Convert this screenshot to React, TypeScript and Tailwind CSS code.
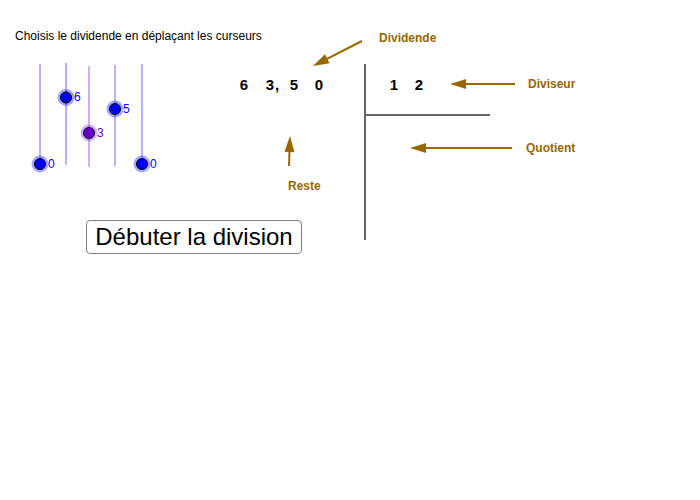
import React from "react";

const F = { fontFamily: '"Liberation Sans", Arial, sans-serif' };

function Arrow({ x1, y1, x2, y2 }: { x1: number; y1: number; x2: number; y2: number }) {
  const dx = x2 - x1;
  const dy = y2 - y1;
  const len = Math.hypot(dx, dy);
  const ux = dx / len;
  const uy = dy / len;
  const hl = 16;
  const hw = 5;
  const bx = x2 - ux * hl;
  const by = y2 - uy * hl;
  const px = -uy * hw;
  const py = ux * hw;
  return (
    <g>
      <line x1={x1} y1={y1} x2={bx + ux * 2} y2={by + uy * 2} stroke="#996600" strokeWidth={2} />
      <polygon points={`${x2},${y2} ${bx + px},${by + py} ${bx - px},${by - py}`} fill="#996600" />
    </g>
  );
}

function Point({ x, y, fill, halo }: { x: number; y: number; fill: string; halo: string }) {
  return (
    <g>
      <circle cx={x} cy={y} r={8.5} fill={halo} />
      <circle cx={x} cy={y} r={5.5} fill={fill} stroke="#000" strokeWidth={1} />
    </g>
  );
}

const digitsTop = [
  { x: 244, t: "6" },
  { x: 270, t: "3" },
  { x: 277, t: "," },
  { x: 294, t: "5" },
  { x: 319, t: "0" },
  { x: 394, t: "1" },
  { x: 419, t: "2" },
];

const sliderLabels = [
  { x: 48, y: 158, t: "0", c: "text-[#0000ff]" },
  { x: 74, y: 91, t: "6", c: "text-[#0000ff]" },
  { x: 97, y: 127, t: "3", c: "text-[#6600cc]" },
  { x: 123, y: 103, t: "5", c: "text-[#0000ff]" },
  { x: 150, y: 158, t: "0", c: "text-[#0000ff]" },
];

export default function App() {
  return (
    <div className="relative w-[700px] h-[500px] bg-white overflow-hidden" style={F}>
      <svg className="absolute left-0 top-0" width={700} height={500}>
        <line x1={40} y1={64} x2={40} y2={164} stroke="#9999ff" strokeWidth={1.5} />
        <line x1={66} y1={63} x2={66} y2={165} stroke="#9999ff" strokeWidth={1.5} />
        <line x1={89} y1={66} x2={89} y2={167} stroke="#bb99ee" strokeWidth={1.5} />
        <line x1={115} y1={65} x2={115} y2={166} stroke="#9999ff" strokeWidth={1.5} />
        <line x1={142} y1={64} x2={142} y2={164} stroke="#9999ff" strokeWidth={1.5} />
        <Point x={40} y={164} fill="#0000ff" halo="rgba(0,0,255,0.35)" />
        <Point x={66} y={97.5} fill="#0000ff" halo="rgba(0,0,255,0.35)" />
        <Point x={89} y={133} fill="#6600cc" halo="rgba(102,0,204,0.3)" />
        <Point x={115} y={109} fill="#0000ff" halo="rgba(0,0,255,0.35)" />
        <Point x={142} y={164} fill="#0000ff" halo="rgba(0,0,255,0.35)" />
        <line x1={365} y1={64} x2={365} y2={240} stroke="#666666" strokeWidth={2} />
        <line x1={365} y1={115} x2={490} y2={115} stroke="#666666" strokeWidth={2} />
        <Arrow x1={362} y1={41} x2={313} y2={66} />
        <Arrow x1={515} y1={84} x2={450} y2={84} />
        <Arrow x1={512} y1={148} x2={410} y2={148} />
        <Arrow x1={289} y1={166} x2={290} y2={136} />
      </svg>

      <span className="absolute left-[15px] top-[30px] text-[12px] leading-none text-black whitespace-nowrap">
        Choisis le dividende en déplaçant les curseurs
      </span>

      {sliderLabels.map((l, i) => (
        <span
          key={i}
          className={`absolute text-[12px] leading-none ${l.c}`}
          style={{ left: l.x, top: l.y }}
        >
          {l.t}
        </span>
      ))}

      {digitsTop.map((d, i) => (
        <span
          key={i}
          className="absolute top-[77px] w-[20px] -ml-[10px] text-center text-[15px] font-bold leading-none text-black"
          style={{ left: d.x }}
        >
          {d.t}
        </span>
      ))}

      <span className="absolute left-[379px] top-[32px] text-[12px] font-bold leading-none text-[#996600]">Dividende</span>
      <span className="absolute left-[528px] top-[78px] text-[12px] font-bold leading-none text-[#996600]">Diviseur</span>
      <span className="absolute left-[526px] top-[142px] text-[12px] font-bold leading-none text-[#996600]">Quotient</span>
      <span className="absolute left-[288px] top-[180px] text-[12px] font-bold leading-none text-[#996600]">Reste</span>

      <button className="absolute left-[86px] top-[220px] w-[216px] h-[34px] border border-[#808080] rounded-[4px] bg-white text-[24px] leading-none text-black flex items-center justify-center" style={F}>
        Débuter la division
      </button>
    </div>
  );
}
